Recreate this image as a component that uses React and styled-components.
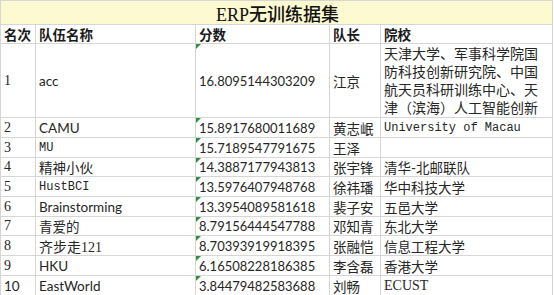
import styled, { createGlobalStyle, css } from "styled-components";

const GlobalStyle = createGlobalStyle`
  html, body {
    margin: 0;
    padding: 0;
    background: #fff;
  }
  body {
    font-family: Lato, "Noto Sans CJK SC", sans-serif;
    color: #262626;
  }
`;

const LINE = "#d6d6d6";

const fonts = {
  sans: css`
    font-family: Lato, "Noto Sans CJK SC", sans-serif;
    font-size: 13.5px;
  `,
  num: css`
    font-family: Lato, "Noto Sans CJK SC", sans-serif;
    font-size: 13px;
  `,
  serif: css`
    font-family: "Liberation Serif", "Noto Sans CJK SC", serif;
    font-size: 14px;
  `,
  mono: css`
    font-family: "Liberation Mono", "Noto Sans CJK SC", monospace;
    font-size: 12px;
  `,
};

const rows = [
  {
    rank: "1",
    team: "acc",
    score: "16.8095144303209",
    leader: "江京",
    school:
      "天津大学、军事科学院国防科技创新研究院、中国航天员科研训练中心、天津（滨海）人工智能创新",
    wrap: true,
  },
  { rank: "2", team: "CAMU", score: "15.8917680011689", leader: "黄志岷", school: "University of Macau", schoolFont: "mono" },
  { rank: "3", team: "MU", teamFont: "mono", score: "15.7189547791675", leader: "王泽", school: "" },
  { rank: "4", team: "精神小伙", score: "14.3887177943813", leader: "张宇锋", school: "清华-北邮联队" },
  { rank: "5", team: "HustBCI", teamFont: "mono", score: "13.5976407948768", leader: "徐祎璠", school: "华中科技大学" },
  { rank: "6", team: "Brainstorming", score: "13.3954089581618", leader: "裴子安", school: "五邑大学" },
  { rank: "7", team: "青爱的", score: "8.79156444547788", leader: "邓知青", school: "东北大学" },
  { rank: "8", team: "齐步走121", teamFont: "serif", score: "8.70393919918395", leader: "张融恺", school: "信息工程大学" },
  { rank: "9", team: "HKU", score: "6.16508228186385", leader: "李含磊", school: "香港大学" },
  { rank: "10", rankFont: "sans", team: "EastWorld", score: "3.84479482583688", leader: "刘畅", school: "ECUST", schoolFont: "serif" },
];

const Sheet = styled.div`
  display: grid;
  grid-template-columns: 35px 160px 134px 51px 172px;
  grid-template-rows: 24px 19px 74px 20px 20px 19px 20px 20px 19px 20px 20px 20px;
  width: 552px;
  border-left: 1px solid ${LINE};
  border-top: 1px solid ${LINE};
`;

const Title = styled.div`
  grid-column: 1 / -1;
  display: flex;
  align-items: center;
  justify-content: center;
  background: #fdf9d0;
  border-right: 1px solid ${LINE};
  border-bottom: 1px solid ${LINE};
  font-family: "Liberation Serif", "Noto Sans CJK SC", serif;
  font-size: 18px;
  font-weight: 500;
  color: #111;
  padding-left: 2px;
`;

const Cell = styled.div`
  position: relative;
  display: flex;
  align-items: ${(p) => (p.$wrap ? "flex-start" : "center")};
  padding: ${(p) => (p.$wrap ? "1px 4px 0 3px" : "0 2px 0 3px")};
  border-right: 1px solid ${LINE};
  border-bottom: 1px solid ${LINE};
  overflow: hidden;
  white-space: ${(p) => (p.$wrap ? "normal" : "nowrap")};
  line-height: ${(p) => (p.$wrap ? "18px" : "normal")};
  ${(p) => fonts[p.$font || "sans"]}

  ${(p) =>
    p.$flag &&
    css`
      &::before {
        content: "";
        position: absolute;
        top: 0;
        left: 0;
        border-top: 5px solid #2f8f3e;
        border-right: 5px solid transparent;
      }
    `}
`;

const Head = styled(Cell)`
  font-family: "Noto Sans CJK SC", sans-serif;
  font-size: 13.5px;
  font-weight: 600;
  color: #1a1a1a;
`;

const Wrapped = styled.span`
  display: block;
  width: 154px;
  font-size: 14px;
  word-break: break-all;
`;

export default function App() {
  return (
    <>
      <GlobalStyle />
      <Sheet>
        <Title>ERP无训练据集</Title>
        <Head>名次</Head>
        <Head>队伍名称</Head>
        <Head>分数</Head>
        <Head>队长</Head>
        <Head>院校</Head>
        {rows.map((r) => (
          <Row key={r.rank} r={r} />
        ))}
      </Sheet>
    </>
  );
}

function Row({ r }) {
  return (
    <>
      <Cell $font={r.rankFont || "serif"}>{r.rank}</Cell>
      <Cell $font={r.teamFont || "sans"}>{r.team}</Cell>
      <Cell $font="num" $flag>
        {r.score}
      </Cell>
      <Cell $font="sans">{r.leader}</Cell>
      <Cell $font={r.schoolFont || "sans"} $wrap={r.wrap}>
        {r.wrap ? <Wrapped>{r.school}</Wrapped> : r.school}
      </Cell>
    </>
  );
}
